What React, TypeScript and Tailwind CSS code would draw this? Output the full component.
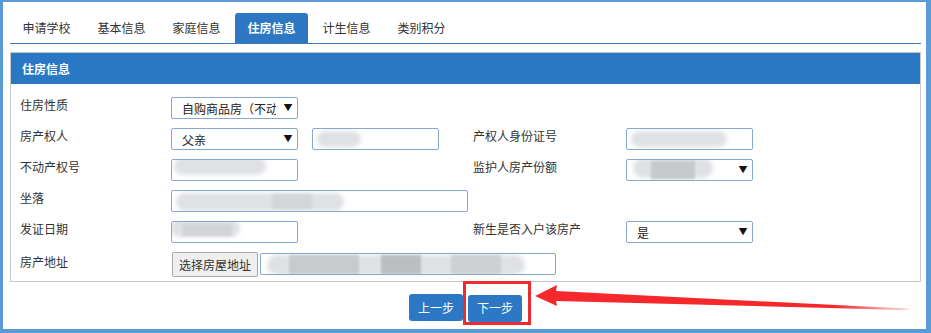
import React from "react";

const TABS = ["申请学校", "基本信息", "家庭信息", "住房信息", "计生信息", "类别积分"];

function Blur({ className }: { className: string }) {
  return (
    <span
      className={`pointer-events-none absolute rounded-full bg-[#dfe1e5] blur-[2px] ${className}`}
    />
  );
}

function Box({
  w,
  select,
  text,
  children,
}: {
  w: string;
  select?: boolean;
  text?: string;
  children?: React.ReactNode;
}) {
  return (
    <div
      className={`relative h-[22px] ${w} shrink-0 overflow-hidden rounded-[2px] border border-[#86a9d4] bg-white`}
    >
      {text ? (
        <span className="absolute left-[10px] top-[3px] max-w-[94px] overflow-hidden whitespace-nowrap text-[12px] leading-[16px] text-[#222]">
          {text}
        </span>
      ) : null}
      {children}
      {select ? (
        <span className="absolute right-[2px] top-0 flex h-full w-[14px] items-center justify-center text-[9px] text-[#111]">
          ▼
        </span>
      ) : null}
    </div>
  );
}

function Label({ children, w }: { children: React.ReactNode; w: string }) {
  return (
    <div className={`${w} shrink-0 text-[12px] leading-[16px] text-[#333]`}>
      {children}
    </div>
  );
}

export default function App() {
  return (
    <div className="relative h-[333px] w-[931px] overflow-hidden bg-white font-['Noto_Sans_CJK_SC','Microsoft_YaHei',sans-serif]">
      <div className="h-full w-full border-b-[4px] border-l-[3px] border-r-[5px] border-t-2 border-[#5b9bd5] bg-white pl-[7px] pt-[11px]">
        {/* tabs */}
        <div className="flex w-[911px] border-b border-[#3f79b3]">
          {TABS.map((t, i) => (
            <div
              key={t}
              className={`mr-[2px] flex h-[30px] w-[73px] items-center justify-center rounded-t-[3px] text-[12px] ${
                i === 3 ? "bg-[#2e77c2] font-bold text-white" : "text-[#333]"
              }`}
            >
              {t}
            </div>
          ))}
        </div>

        {/* panel */}
        <div className="mt-[8px] w-[911px] border border-[#c9c9c9]">
          <div className="flex h-[31px] items-center bg-[#2a78c4] pl-[11px] text-[12px] font-bold text-white">
            住房信息
          </div>
          <div className="flex flex-col gap-[9px] pb-[4px] pl-[9px] pt-[13px]">
            <div className="flex items-start">
              <Label w="w-[151px]">住房性质</Label>
              <Box w="w-[127px]" select text="自购商品房（不动" />
            </div>

            <div className="flex items-start">
              <Label w="w-[151px]">房产权人</Label>
              <Box w="w-[127px]" select text="父亲" />
              <div className="ml-[14px]">
                <Box w="w-[127px]">
                  <Blur className="left-[4px] top-[2px] h-[16px] w-[44px]" />
                </Box>
              </div>
              <div className="w-[34px]" />
              <Label w="w-[153px]">产权人身份证号</Label>
              <Box w="w-[127px]">
                <Blur className="left-[4px] top-[2px] h-[16px] w-[96px]" />
              </Box>
            </div>

            <div className="flex items-start">
              <Label w="w-[151px]">不动产权号</Label>
              <Box w="w-[127px]">
                <Blur className="left-[2px] top-[-3px] h-[18px] w-[92px]" />
              </Box>
              <div className="w-[175px]" />
              <Label w="w-[153px]">监护人房产份额</Label>
              <Box w="w-[127px]" select>
                <Blur className="left-[6px] top-[-2px] h-[20px] w-[80px]" />
                <span className="absolute left-[24px] top-[1px] h-[18px] w-[44px] bg-[#c8c9cc] blur-[1px]" />
              </Box>
            </div>

            <div className="flex items-start">
              <Label w="w-[151px]">坐落</Label>
              <Box w="w-[297px]">
                <Blur className="left-[4px] top-[2px] h-[18px] w-[168px]" />
                <span className="absolute left-[100px] top-[3px] h-[15px] w-[40px] bg-[#d5d6d9] blur-[1px]" />
              </Box>
            </div>

            <div className="flex items-start">
              <Label w="w-[151px]">发证日期</Label>
              <Box w="w-[127px]">
                <Blur className="left-[-2px] top-[-3px] h-[18px] w-[70px]" />
                <span className="absolute left-[10px] top-[2px] h-[12px] w-[50px] bg-[#d3d4d7] blur-[1px]" />
              </Box>
              <div className="w-[175px]" />
              <Label w="w-[153px]">新生是否入户该房产</Label>
              <Box w="w-[127px]" select text="是" />
            </div>

            <div className="flex items-start">
              <Label w="w-[152px] pt-[2px]">房产地址</Label>
              <button className="h-[25px] w-[86px] shrink-0 rounded-[2px] border border-[#a9a9a9] bg-[#efefef] text-[12px] text-[#333]">
                选择房屋地址
              </button>
              <div className="ml-[2px] mt-[1px]">
                <Box w="w-[296px]">
                  <Blur className="left-[6px] top-[1px] h-[20px] w-[258px]" />
                  <span className="absolute left-[28px] top-[1px] h-[19px] w-[70px] bg-[#c9cacd] blur-[1px]" />
                  <span className="absolute left-[120px] top-[1px] h-[19px] w-[40px] bg-[#bdbec1] blur-[1px]" />
                  <span className="absolute left-[190px] top-[1px] h-[19px] w-[50px] bg-[#cfd0d3] blur-[1px]" />
                </Box>
              </div>
            </div>
          </div>
        </div>

        {/* step buttons */}
        <div className="mt-[12px] flex w-[911px] justify-center gap-[5px]">
          <button className="h-[27px] w-[54px] rounded-[3px] bg-[#2c78c4] text-[12px] text-white">
            上一步
          </button>
          <div className="relative">
            <button className="h-[27px] w-[54px] rounded-[3px] bg-[#2c78c4] text-[12px] text-white">
              下一步
            </button>
            <span className="pointer-events-none absolute left-[-5px] top-[-13px] h-[44px] w-[68px] border-[3px] border-[#ee2b2f]" />
          </div>
        </div>
      </div>

      {/* annotation arrow */}
      <svg
        className="pointer-events-none absolute left-0 top-0"
        width="931"
        height="333"
        viewBox="0 0 931 333"
      >
        <defs>
          <linearGradient id="fade" x1="535" y1="0" x2="910" y2="0" gradientUnits="userSpaceOnUse">
            <stop offset="0" stopColor="#f5292c" />
            <stop offset="0.8" stopColor="#f5292c" />
            <stop offset="1" stopColor="#f5292c" stopOpacity="0.2" />
          </linearGradient>
        </defs>
        <polygon
          points="535,296 557,285 556,291 905,308.5 910,309 905,310 556,301 557,306"
          fill="url(#fade)"
        />
      </svg>
    </div>
  );
}
